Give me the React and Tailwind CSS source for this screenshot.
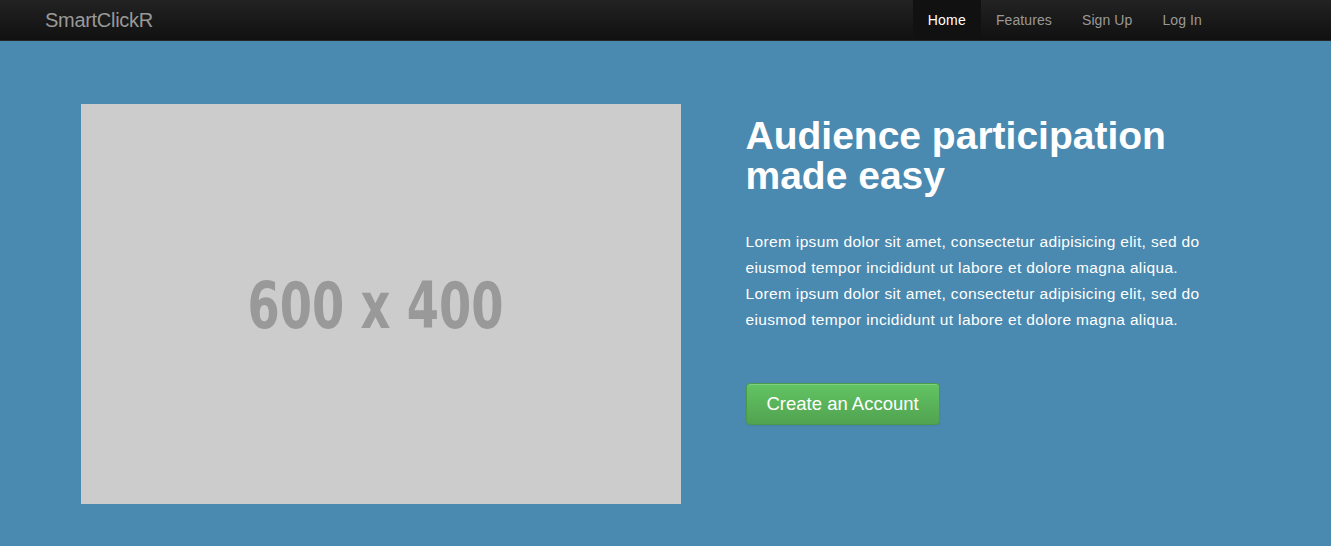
import React from 'react';

const font = { fontFamily: '"Liberation Sans", Arial, Helvetica, sans-serif' };

function Navbar() {
  const links = ['Features', 'Sign Up', 'Log In'];
  return (
    <div className="h-[41px] bg-gradient-to-b from-[#222222] to-[#111111] border-b border-[#252525] flex items-stretch justify-between pl-[45px] pr-[114px]">
      <a className="text-[20px] leading-[40px] text-[#999999] tracking-[-0.3px]" href="#">SmartClickR</a>
      <ul className="flex items-stretch text-[14px]">
        <li className="bg-[#111111] px-[15px] leading-[40px] text-white tracking-[0.2px]">Home</li>
        {links.map((l) => (
          <li key={l} className="px-[15px] leading-[40px] text-[#999999] tracking-[0.1px]">{l}</li>
        ))}
      </ul>
    </div>
  );
}

export default function App() {
  return (
    <div className="min-h-[546px] bg-[#4a89b0]" style={font}>
      <Navbar />
      <div className="w-[1170px] mx-auto pt-[63px] flex">
        <div className="w-[600px] h-[400px] bg-[#cccccc] flex items-center justify-center shrink-0 pr-[10px]">
          <span
            className="text-[#999999] text-[64px] font-bold [transform:scaleX(0.725)] pt-[4px]"
            style={{ fontFamily: '"DejaVu Sans", sans-serif' }}
          >
            600 x 400
          </span>
        </div>
        <div className="ml-[65px] pt-[12px] text-white">
          <h1 className="text-[39px] leading-[40px] font-bold">
            Audience participation<br />made easy
          </h1>
          <p className="mt-[33px] text-[15.5px] leading-[26px] tracking-[0.35px]">
            Lorem ipsum dolor sit amet, consectetur adipisicing elit, sed do<br />
            eiusmod tempor incididunt ut labore et dolore magna aliqua.<br />
            Lorem ipsum dolor sit amet, consectetur adipisicing elit, sed do<br />
            eiusmod tempor incididunt ut labore et dolore magna aliqua.
          </p>
          <button className="mt-[50px] h-[42px] px-[20px] rounded-[4px] bg-gradient-to-b from-[#62c462] to-[#51a351] border border-[#4a9a4a] text-white text-[18.5px] shadow-[inset_0_1px_0_rgba(255,255,255,0.2),0_1px_2px_rgba(0,0,0,0.05)]">
            Create an Account
          </button>
        </div>
      </div>
    </div>
  );
}
